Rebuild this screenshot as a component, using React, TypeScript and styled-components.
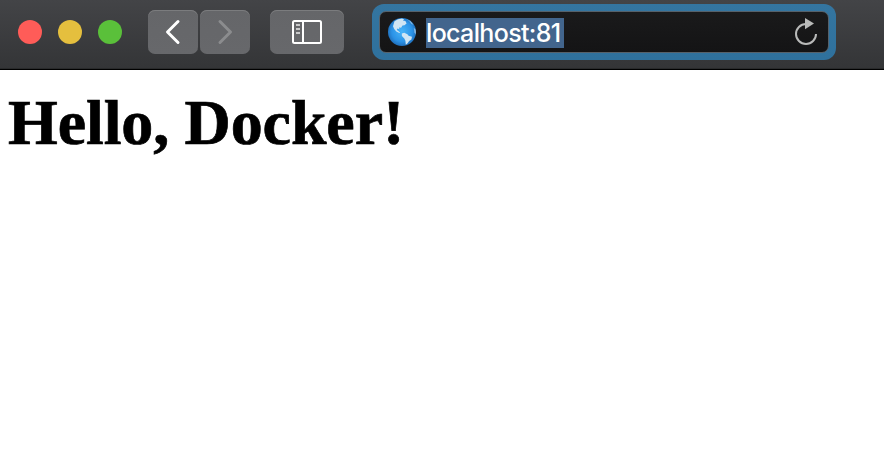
import React from "react";
import styled, { createGlobalStyle } from "styled-components";

const GlobalStyle = createGlobalStyle`
  * { box-sizing: border-box; }
  body { margin: 0; background: #fff; }
`;

const Window = styled.div`
  width: 884px;
  height: 466px;
  overflow: hidden;
  background: #fff;
`;

const Toolbar = styled.header`
  display: flex;
  align-items: flex-start;
  height: 70px;
  padding: 4px 18px 0;
  background: linear-gradient(#434447, #343537 68px, #292a2b 68px, #292a2b 69px, #000 69px);
`;

const TrafficLights = styled.div`
  display: flex;
  gap: 16px;
  margin: 16px 26px 0 0;
`;

const Light = styled.span<{ $color: string }>`
  width: 24px;
  height: 24px;
  border-radius: 50%;
  background: ${(p) => p.$color};
`;

const ButtonGroup = styled.div`
  display: flex;
  gap: 2px;
  margin: 6px 20px 0 0;
`;

const ToolButton = styled.button<{ $width: number }>`
  display: flex;
  align-items: center;
  justify-content: center;
  width: ${(p) => p.$width}px;
  height: 44px;
  padding: 0;
  border: 0;
  border-radius: 7px;
  background: linear-gradient(#656669, #67686b);
  box-shadow: inset 0 1px 0 #7b7c7e;
`;

const SidebarGroup = styled(ButtonGroup)`
  margin-right: 28px;
`;

const FocusRing = styled.div`
  width: 464px;
  height: 56px;
  padding: 7px;
  border-radius: 12px;
  background: linear-gradient(#3475a0, #2f719d);
`;

const AddressBar = styled.div`
  display: flex;
  align-items: center;
  height: 42px;
  padding: 0 10px 0 8px;
  border: 1px solid #56616a;
  border-radius: 7px;
  background: linear-gradient(#1a1a1b, #141415);
`;

const Address = styled.span`
  width: 138px;
  height: 30px;
  margin: 2px auto 0 10px;
  background: #42658d;
  color: #fff;
  font: 500 25px/31px Inter, "Liberation Sans", sans-serif;
  letter-spacing: -0.65px;
  white-space: nowrap;
`;

const Heading = styled.h1`
  margin: 0;
  padding: 16px 8px 0;
  color: #000;
  font: 700 64px/74px "Liberation Serif", serif;
  letter-spacing: -0.1px;
  word-spacing: -0.5px;
  -webkit-text-stroke: 0.7px #000;
  white-space: nowrap;
`;

const Icon = styled.svg`
  display: block;
  flex: none;
`;

const Chevron = ({ forward = false }: { forward?: boolean }) => (
  <Icon width="50" height="44" viewBox="0 0 50 44" fill="none">
    <path
      d={forward ? "M20 11.5 30.5 22 20 32.5" : "M30 11.5 19.5 22 30 32.5"}
      stroke={forward ? "#8b8c8e" : "#fff"}
      strokeWidth="3"
      strokeLinecap="round"
      strokeLinejoin="round"
    />
  </Icon>
);

const SidebarIcon = () => (
  <Icon width="30" height="24" viewBox="0 0 30 24" fill="none">
    <rect x="1" y="1" width="28" height="22" rx="1.5" stroke="#fff" strokeWidth="2" />
    <path d="M11 1v22" stroke="#fff" strokeWidth="2" />
    <path d="M4 5h4M4 9h4M4 13h4" stroke="#c9c9ca" strokeWidth="2" />
  </Icon>
);

const Globe = () => (
  <Icon width="28" height="28" viewBox="0 0 28 28">
    <defs>
      <radialGradient id="sea" cx="50%" cy="48%" r="56%">
        <stop offset="0" stopColor="#46b4fa" />
        <stop offset=".65" stopColor="#2b92e6" />
        <stop offset="1" stopColor="#1c66b0" />
      </radialGradient>
      <clipPath id="disc">
        <circle cx="14" cy="14" r="14" />
      </clipPath>
    </defs>
    <circle cx="14" cy="14" r="14" fill="url(#sea)" />
    <g clipPath="url(#disc)" fill="#cfe5f4">
      <path d="M6.5 3.2 10 1.2l4-.8 2.2 1.1-1.4 1.1 2.6.5 1.2 2.5-2.1 1.7-2 .2-1.4 2.2-2.1-.3.4 1.8-2-.8-.6 1.5 1.6 1.2 1.8 1.6-.9.3-3-1.6-2.1-2.4L5 8.2z" />
      <path d="m13.8 15.4 2.5-.7 3.1 1.5 1.2 1.5 3.4 1-.6 2.8-2.3 1.4-1.5 2.4-1.8 1.4-.4-4-1.1-2.3-2.4-2.3z" />
      <path d="m18.6 1 4.2 2.2 2.6 3.5-2-.8-2.2-2.8z" opacity=".55" />
      <path d="m25.8 9.8 2.2 2v5l-1.6-2.3z" opacity=".55" />
    </g>
  </Icon>
);

const ReloadIcon = () => (
  <Icon width="24" height="28" viewBox="0 0 24 28" fill="none">
    <path d="M22 16A10 10 0 1 1 12 6" stroke="#b9bab9" strokeWidth="2" />
    <path d="M11 0v11.2l9-5.6z" fill="#b9bab9" />
  </Icon>
);

export default function App() {
  return (
    <Window>
      <GlobalStyle />
      <Toolbar>
        <TrafficLights>
          <Light $color="#ff5c58" />
          <Light $color="#e5bf3e" />
          <Light $color="#5ac03a" />
        </TrafficLights>
        <ButtonGroup>
          <ToolButton $width={50} aria-label="Back"><Chevron /></ToolButton>
          <ToolButton $width={50} aria-label="Forward"><Chevron forward /></ToolButton>
        </ButtonGroup>
        <SidebarGroup>
          <ToolButton $width={74} aria-label="Sidebar"><SidebarIcon /></ToolButton>
        </SidebarGroup>
        <FocusRing>
          <AddressBar>
            <Globe />
            <Address>localhost:81</Address>
            <ReloadIcon />
          </AddressBar>
        </FocusRing>
      </Toolbar>
      <Heading>Hello, Docker!</Heading>
    </Window>
  );
}
